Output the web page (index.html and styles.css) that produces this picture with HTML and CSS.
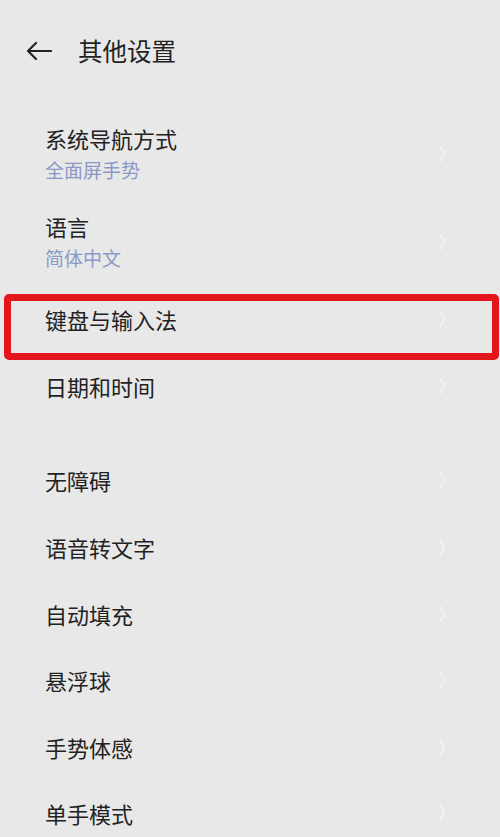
FILE: index.html
```html
<!DOCTYPE html>
<html lang="zh-CN">
<head>
<meta charset="utf-8">
<title>其他设置</title>
<link rel="stylesheet" href="styles.css">
</head>
<body>
<div class="page">
  <header class="header">
    <svg class="back" width="26" height="20" viewBox="0 0 26 20">
      <path d="M25 10 H2 M10 2 L2 10 L10 18" fill="none" stroke="#222" stroke-width="2.2" stroke-linecap="round" stroke-linejoin="round"/>
    </svg>
    <h1 class="title">其他设置</h1>
  </header>
  <div class="list">
    <div class="row two">
      <div class="texts"><div class="label">系统导航方式</div><div class="sub">全面屏手势</div></div>
      <svg class="chev" width="8" height="20" viewBox="0 0 8 20"><path d="M1.5 1.5 L6.5 10 L1.5 18.5" fill="none" stroke="#f3f3f3" stroke-width="1.6" stroke-linecap="round" stroke-linejoin="round"/></svg>
    </div>
    <div class="row two">
      <div class="texts"><div class="label">语言</div><div class="sub">简体中文</div></div>
      <svg class="chev" width="8" height="20" viewBox="0 0 8 20"><path d="M1.5 1.5 L6.5 10 L1.5 18.5" fill="none" stroke="#f3f3f3" stroke-width="1.6" stroke-linecap="round" stroke-linejoin="round"/></svg>
    </div>
    <div class="row one marked">
      <div class="texts"><div class="label">键盘与输入法</div></div>
      <svg class="chev" width="8" height="20" viewBox="0 0 8 20"><path d="M1.5 1.5 L6.5 10 L1.5 18.5" fill="none" stroke="#f3f3f3" stroke-width="1.6" stroke-linecap="round" stroke-linejoin="round"/></svg>
      <div class="highlight"></div>
    </div>
    <div class="row one">
      <div class="texts"><div class="label">日期和时间</div></div>
      <svg class="chev" width="8" height="20" viewBox="0 0 8 20"><path d="M1.5 1.5 L6.5 10 L1.5 18.5" fill="none" stroke="#f3f3f3" stroke-width="1.6" stroke-linecap="round" stroke-linejoin="round"/></svg>
    </div>
  </div>
  <div class="list second">
    <div class="row one">
      <div class="texts"><div class="label">无障碍</div></div>
      <svg class="chev" width="8" height="20" viewBox="0 0 8 20"><path d="M1.5 1.5 L6.5 10 L1.5 18.5" fill="none" stroke="#f3f3f3" stroke-width="1.6" stroke-linecap="round" stroke-linejoin="round"/></svg>
    </div>
    <div class="row one">
      <div class="texts"><div class="label">语音转文字</div></div>
      <svg class="chev" width="8" height="20" viewBox="0 0 8 20"><path d="M1.5 1.5 L6.5 10 L1.5 18.5" fill="none" stroke="#f3f3f3" stroke-width="1.6" stroke-linecap="round" stroke-linejoin="round"/></svg>
    </div>
    <div class="row one">
      <div class="texts"><div class="label">自动填充</div></div>
      <svg class="chev" width="8" height="20" viewBox="0 0 8 20"><path d="M1.5 1.5 L6.5 10 L1.5 18.5" fill="none" stroke="#f3f3f3" stroke-width="1.6" stroke-linecap="round" stroke-linejoin="round"/></svg>
    </div>
    <div class="row one">
      <div class="texts"><div class="label">悬浮球</div></div>
      <svg class="chev" width="8" height="20" viewBox="0 0 8 20"><path d="M1.5 1.5 L6.5 10 L1.5 18.5" fill="none" stroke="#f3f3f3" stroke-width="1.6" stroke-linecap="round" stroke-linejoin="round"/></svg>
    </div>
    <div class="row one">
      <div class="texts"><div class="label">手势体感</div></div>
      <svg class="chev" width="8" height="20" viewBox="0 0 8 20"><path d="M1.5 1.5 L6.5 10 L1.5 18.5" fill="none" stroke="#f3f3f3" stroke-width="1.6" stroke-linecap="round" stroke-linejoin="round"/></svg>
    </div>
    <div class="row one">
      <div class="texts"><div class="label">单手模式</div></div>
      <svg class="chev" width="8" height="20" viewBox="0 0 8 20"><path d="M1.5 1.5 L6.5 10 L1.5 18.5" fill="none" stroke="#f3f3f3" stroke-width="1.6" stroke-linecap="round" stroke-linejoin="round"/></svg>
    </div>
  </div>
</div>
</body>
</html>
```
FILE: styles.css
```css
html, body {
  margin: 0;
  padding: 0;
  background: #e8e8e8;
}
body {
  font-family: "Noto Sans CJK SC", "Noto Sans", sans-serif;
  color: #222;
  overflow: hidden;
}
.page {
  width: 500px;
  height: 837px;
  overflow: hidden;
}
.header {
  height: 102px;
  display: flex;
  align-items: center;
  padding-left: 26px;
  box-sizing: border-box;
}
.back {
  display: block;
  flex: none;
}
.title {
  margin: 0 0 0 26px;
  font-size: 24.5px;
  font-weight: 400;
  line-height: 32px;
  color: #222;
}
.list {
  padding-top: 8px;
}
.list.second {
  padding-top: 28px;
}
.row {
  position: relative;
  display: flex;
  align-items: center;
  justify-content: space-between;
  padding: 0 54px 0 45px;
  box-sizing: border-box;
}
.row.two {
  height: 88px;
}
.row.one {
  height: 66.6px;
}
.texts {
  display: flex;
  flex-direction: column;
  gap: 2px;
}
.label {
  font-size: 22px;
  line-height: 30px;
  color: #222;
}
.sub {
  font-size: 19px;
  line-height: 30px;
  color: #8b99c6;
}
.chev {
  display: block;
  flex: none;
}
.highlight {
  position: absolute;
  left: 4px;
  right: 1px;
  top: 8px;
  bottom: -7px;
  border: 7px solid #e3171b;
  border-radius: 5px;
  pointer-events: none;
}
```
